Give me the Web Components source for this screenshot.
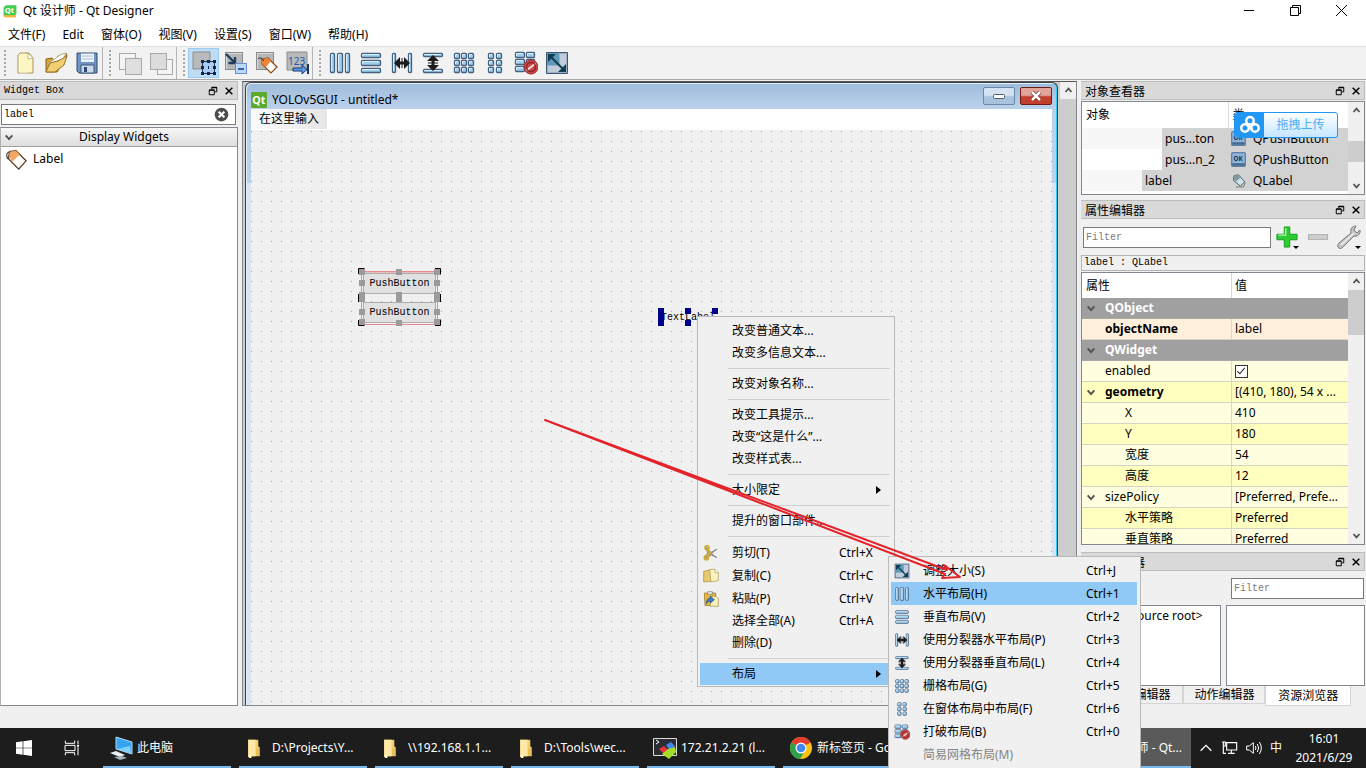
<!DOCTYPE html>
<html lang="zh-CN">
<head>
<meta charset="utf-8">
<title>Qt 设计师 - Qt Designer</title>
<style>
  html, body { margin: 0; height: 100%; }
  body {
    font: 12px/16px "Noto Sans", "Noto Sans CJK SC", sans-serif;
    color: #000; background: #f0f0f0; overflow: hidden;
  }
</style>
</head>
<body>
<designer-app></designer-app>

<script>
const RESET = `
  *, *::before, *::after { box-sizing: border-box; }
  :host { box-sizing: border-box; display: block; }
  :host([hidden]) { display: none; }
  button, input { font: inherit; color: inherit; margin: 0; padding: 0; border: 0; background: none; border-radius: 0; outline: 0; }
  a { color: inherit; text-decoration: none; }
  svg { display: block; }
  .mono { font: 10px/14px "Liberation Mono", "Noto Sans CJK SC", monospace; }
`;
function define(tag, css, html) {
  customElements.define(tag, class extends HTMLElement {
    constructor() {
      super();
      const host = this;
      const root = this.attachShadow({ mode: 'open' });
      root.innerHTML = `<style>${RESET}${css}</style>${typeof html === 'function' ? html(n => host.getAttribute(n) || '') : html}`;
    }
  });
}

/* ---------- icons ---------- */
const bar = (x, y, w, h) =>
  `<rect x="${x + .5}" y="${y + .5}" width="${w - 1}" height="${h - 1}" rx="1" fill="#9fcfee" stroke="#46607f" stroke-width="1.300"/><path d="M${x + 1.5} ${y + h - 2}V${y + 1.5}H${x + w - 2}" stroke="#d8efff" fill="none"/>`;
const cells = (xs, ys, s) => xs.map(x => ys.map(y => bar(x, y, s, s)).join('')).join('');
const graySq = (x, y, s, f) => `<rect x="${x + .5}" y="${y + .5}" width="${s}" height="${s}" fill="${f}" stroke="#a9a9a9"/>`;
const darkSq = `<rect x="2.500" y="1.500" width="17" height="17" fill="#b5b7b9" stroke="#8a8c8e"/><path d="M3.500 18V2.500H19" stroke="#d6d8da" fill="none"/>`;
const folderIcon = '<path d="M5 2h12v8l2 1v11H7l-2 1z" fill="#e9bf5a"/><path d="M5 2h9v20H8l-3 1z" fill="#ffe9a6"/><path d="M14 3h3v8l-3 3z" fill="#f3cf72"/><path d="M6 20h3v4H6z" fill="#fff3c9"/>';
const ICONS = {
  qt: '<path d="M5 2h18v15l-5 4H1V6z" fill="#41cd52"/><path d="M2 19h20v4H2z" fill="#f0b43c"/><text x="3" y="15" font-family="Noto Sans" font-weight="700" font-size="13" fill="#fff">Qt</text>',
  qtbox: '<rect x="0" y="0" width="24" height="24" rx="2" fill="#5caa2c"/><text x="2" y="18" font-family="Open Sans" font-weight="700" font-size="16" fill="#fff">Qt</text>',
  newfile: '<path d="M7 2h9l4 5v15H5V4z" fill="#fdf6c4" stroke="#a8975a"/><path d="M15 2l5 5-5 1z" fill="#fff" stroke="#b7a768" stroke-width=".8"/><path d="M6.500 4v17h8" stroke="#fffde8" fill="none"/>',
  open: '<path d="M2 21V8l6-1 2 2 4-4 8-3 1 3-4 2v5l-6 9z" fill="#d4a13a" stroke="#8a651c"/><path d="M4 13L16 4l6-2-3 6z" fill="#fff" stroke="#b9b19b" stroke-width=".8"/><path d="M2 21l4-9 8-2 9-5-3 9-9 7z" fill="#f2ce72" stroke="#9a7327"/>',
  save: '<path d="M2 2h20v20H4l-2-2z" fill="#6f94c4" stroke="#2f4a74"/><path d="M6 2.500h13V11H6z" fill="#eaf1f8"/><path d="M7 5h11M7 8h11" stroke="#b5c6da"/><path d="M6 14h13v8H6z" fill="#cfdae8" stroke="#38557f"/><path d="M9 16h3v5H9z" fill="#2f4a74"/>',
  front: graySq(1, 2, 16, '#f4f4f4') + graySq(7, 7, 16, '#dfdfdf'),
  back: graySq(8, 8, 15, '#f4f4f4') + graySq(1, 2, 16, '#dcdcdc'),
  widgets: '<path d="M1 1h17v17H1z" fill="#b8babc" stroke="#8a8c8e"/><path d="M10.500 10.500h12v12h-12z" fill="#aac9f3" stroke="#20395f"/><path d="M9 9h3v3H9zM15 9h3v3h-3zM21 9h3v3h-3zM9 15h3v3H9zM21 15h3v3h-3zM9 21h3v3H9zM15 21h3v3h-3zM21 21h3v3h-3zM16 15h1v3h-1z" fill="#12264a"/>',
  signals: darkSq + '<path d="M3 3l8 8M12 6v6H5.500" stroke="#1d3f5d" stroke-width="2.400" fill="none"/><rect x="12.500" y="12.500" width="11" height="10" fill="#bcd7f8" stroke="#6c8fd0"/><path d="M15 18h6" stroke="#3561b4" stroke-width="2"/>',
  buddies: darkSq + '<path d="M8 8l6-1 9 9-6 6-9-9z" fill="#fff" stroke="#8f4512" stroke-width="1.200"/><path d="M8 8l6-1 3 3-5.500 6.500L8 13z" fill="#f08436"/><path d="M4 8c2-2 4-1 6 2" stroke="#222" fill="none"/>',
  taborder: '<path d="M2 1h20v18H2z" fill="#b7b9bb" stroke="#8a8c8e"/><text x="3" y="14" font-family="Noto Sans" font-weight="400" font-size="10" fill="#1e5aa8">123</text><path d="M8 17h9v-3l5 4.500-5 4.500v-3H8z" fill="#5d9be6" stroke="#16366e"/><path d="M23 13v10" stroke="#16366e" stroke-width="2"/>',
  hbox: bar(2, 2, 5, 20) + bar(9, 2, 6, 20) + bar(17, 2, 5, 20),
  vbox: bar(2, 2, 20, 5) + bar(2, 9, 20, 6) + bar(2, 17, 20, 5),
  hsplit: bar(2, 2, 4, 20) + bar(18, 2, 4, 20) + '<path d="M4 12l6-6v4.500h4V6l6 6-6 6v-4.500h-4V18z" fill="#1c1c1c"/><path d="M12 7v10" stroke="#1c1c1c"/>',
  vsplit: bar(2, 2, 20, 4) + bar(2, 18, 20, 4) + '<path d="M12 4l6 6h-4.500v4H18l-6 6-6-6h4.500v-4H6z" fill="#1c1c1c"/><path d="M7 12h10" stroke="#1c1c1c"/>',
  grid: cells([2, 9, 16], [2, 9, 16], 6),
  form: cells([5, 13], [2, 9, 16], 6),
  brk: bar(1, 1, 10, 6) + bar(12, 1, 9, 6) + bar(1, 8, 10, 6) + bar(12, 8, 9, 6) + bar(1, 15, 10, 6) + '<circle cx="17" cy="16" r="7" fill="#cf4848" stroke="#9c2a2a"/><path d="M12.500 19.500l9-7" stroke="#e9dede" stroke-width="2"/><circle cx="17" cy="16" r="4.500" fill="none" stroke="#8f2525" stroke-width="1.500"/>',
  adjust: '<path d="M1.500 1.500h21v21h-21z" fill="#9dafc4" stroke="#3e5876"/><path d="M2 2h12v12H2z" fill="#5f9ab8"/><path d="M15 3h6v18H3v-6h12z" fill="#c0cddb"/><path d="M5 5l14 14" stroke="#123e52" stroke-width="2"/><path d="M3 3h8l-8 8zM21 21h-8l8-8z" fill="#123e52"/>',
  label: '<path d="M3 12C0 5 4 2 10 7" stroke="#333" stroke-width="1.200" fill="none"/><path d="M4 10l1-6 7-1 11 11-8 9L4 12z" fill="#fff" stroke="#5a3a20" stroke-width="1.400"/><path d="M5 10V4l7-1 4 4-8 8z" fill="#f2a765"/>',
  labelg: '<path d="M4 10l1-6 7-1 10 11-7 7L4 12z" fill="#cfe2ea" stroke="#46606e" stroke-width="1.600"/><path d="M5 10V4l7-1 3 4-7 7z" fill="#81999f"/><path d="M8 22h12l3-7" stroke="#8a8a8a" stroke-width="2" fill="none"/>',
  okbtn: '<rect x="1" y="1" width="22" height="22" rx="2" fill="#8db4d8" stroke="#5d80a4" stroke-width="2"/><path d="M2 18h20v4H2z" fill="#46688c"/><text x="4" y="15" font-family="Noto Sans" font-weight="700" font-size="10" fill="#173657">OK</text>',
  cut: '<path d="M4 2l8 9 9-5-8 7 8 6-9-4-6 5-4-1 5-7z" fill="#a7a9a3" stroke="#72746c"/><circle cx="6" cy="4" r="3" fill="none" stroke="#d2a930" stroke-width="2.500"/><circle cx="5" cy="19" r="3" fill="none" stroke="#d2a930" stroke-width="2.500"/><path d="M7 7l4 5-4 5" stroke="#d2a930" stroke-width="3" fill="none"/>',
  copy: '<path d="M1 5l9-2 3 3v14l-12 1z" fill="#e9c96e" stroke="#a98a3d"/><path d="M10 2h8l5 5v12l-11 2z" fill="#fbf2c3" stroke="#ad9250"/><path d="M18 2v5h5" fill="#fff" stroke="#ad9250"/>',
  paste: '<path d="M2 3h17v18l-16 1z" fill="#e4b73c" stroke="#8f6e20"/><path d="M7 1h7v4H7z" fill="#eee" stroke="#777"/><path d="M11 8h9l3 3v12H11z" fill="#f7f0bb" stroke="#9a874a"/><path d="M5 19c0-6 3-8 6-8V8l6 5-6 5v-3c-3 0-4 1-6 4z" fill="#3f7fd0" stroke="#1d4684"/>',
  plus: '<path d="M9 1h6v8h8v6h-8v8H9v-8H1V9h8z" fill="#2ecb35" stroke="#129a1b"/><path d="M10.500 2.500V10H2.500" stroke="#b5f3b5" fill="none" stroke-width="1.500"/>',
  minus: '<rect x="1.500" y="9.500" width="21" height="5" fill="#cfcfcf" stroke="#a8a8a8"/>',
  wrench: '<path d="M1 22c-1-2 0-3 1-4L14 8c-1-4 1-7 5-7l-2 4 3 3 3-3c1 4-3 7-6 6L6 22c-2 2-4 2-5 0z" fill="#bfc1c3" stroke="#77797b"/><path d="M4 20L17 8" stroke="#f3f3f3" stroke-width="1.500"/>',
  folder: folderIcon,
  pc: '<path d="M7 1l16 5v12L7 13z" fill="#35a6ee" stroke="#b6d9ee"/><path d="M8 13l14 5-1-8z" fill="#7fd0fb"/><path d="M1 17l6-2 9 4-5 2z" fill="#e9eef2"/><path d="M5 21l8-1 5 2-7 2z" fill="#a8b2ba"/>',
  xterm: '<path d="M.5 2.500h23v17H.5z" fill="#2c2d33" stroke="#dcdcdc"/><path d="M3 4l3 2-3 2" stroke="#fff" fill="none"/><path d="M6 13l5-3 4 4-4 4z" fill="#ef3340"/><path d="M13 9l5-3 4 4-5 5z" fill="#3f86ee"/><path d="M9 18l6-5 7-2 1 5-7 7z" fill="#a6dd28"/>',
  chrome: '<circle cx="12" cy="12" r="11" fill="#fbc116"/><path d="M12 12L2.500 6.500A11 11 0 0 1 21.500 6.500z" fill="#e33b2e"/><path d="M12 1a11 11 0 0 1 9.500 5.500H12z" fill="#e33b2e"/><path d="M2.500 6.500A11 11 0 0 0 11 23l5-8.500-4-2.500z" fill="#2aa14b"/><circle cx="12" cy="12" r="5.500" fill="#fff"/><circle cx="12" cy="12" r="4.300" fill="#4285f4"/>',
  windows: '<path d="M0 3.500l10-1.500v9.500H0zM11 1.800L24 0v11.500H11zM0 12.500h10V22L0 20.500zM11 12.500h13V24l-13-1.800z" fill="#fff"/>',
  taskview: '<path d="M2 1v4h14V1M2 23v-4h14v4M1.500 8h15v8h-15z" stroke="#fff" stroke-width="1.500" fill="none"/><path d="M21 1v5M21 11v12" stroke="#fff" stroke-width="1.500"/><path d="M19.500 7h3v3h-3z" fill="#fff"/>',
  up: '<path d="M4 16l8-9 8 9" stroke="#505050" stroke-width="4.500" fill="none"/>',
  down: '<path d="M4 8l8 9 8-9" stroke="#505050" stroke-width="4.500" fill="none"/>',
  chev: '<path d="M4 16l8-8 8 8" stroke="#fff" stroke-width="2" fill="none"/>',
  net: '<path d="M7 4h15v11H7zM14 15v5M9 20h10M2 3v6h5M2 9v11h4M0 3h5v5" stroke="#fff" stroke-width="1.700" fill="none"/>',
  sound: '<path d="M1 9v6h4l6 5V4L5 9z" stroke="#fff" stroke-width="1.500" fill="none"/><path d="M14 9q2 3 0 6M17 6q4 6 0 12M20 3q6 9 0 18" stroke="#fff" stroke-width="1.500" fill="none"/>',
  float: '<path d="M9 7V3h12v11h-4M3 9.500h12V21H3z" stroke="#000" stroke-width="2.400" fill="none"/><path d="M3 10h12M9 4h12" stroke="#000" stroke-width="3"/>',
  close: '<path d="M4 4l16 16M20 4L4 20" stroke="#000" stroke-width="3.500" fill="none"/>',
  clear: '<circle cx="12" cy="12" r="11" fill="#4d4d4d"/><path d="M7.500 7.500l9 9M16.500 7.500l-9 9" stroke="#fff" stroke-width="3.500"/>',
  cloud: '<g fill="none" stroke="#fff" stroke-width="3"><circle cx="12" cy="7" r="4.500"/><circle cx="6" cy="15.500" r="4.500"/><circle cx="18" cy="15.500" r="4.500"/><path d="M9 12l6 6"/></g>'
};
customElements.define('ui-icon', class extends HTMLElement {
  constructor() {
    super();
    const s = this.getAttribute('size') || 16;
    this.attachShadow({ mode: 'open' }).innerHTML =
      `<style>:host{display:block;flex:none;width:${s}px;height:${s}px}svg{display:block;width:100%;height:100%}</style>
       <svg viewBox="0 0 24 24" aria-hidden="true">${ICONS[this.getAttribute('name')] || ''}</svg>`;
  }
});
const icon = (n, s = 16) => `<ui-icon name="${n}" size="${s}"></ui-icon>`;

/* ---------- window chrome ---------- */
define('app-titlebar', `
  :host { display: flex; align-items: center; height: 24px; background: #fff; padding: 0 2px 4px 3px; gap: 6px; flex: none; }
  span { flex: 1; padding-top: 2px; }
  ui-icon { margin-top: 2px; }
  div { display: flex; }
  button { width: 46px; height: 20px; display: grid; place-items: center; }
`, `
  ${icon('qt', 14)}<span>Qt 设计师 - Qt Designer</span>
  <div>
    <button aria-label="Minimize"><svg width="11" height="11"><path d="M0 5.500h10" stroke="#000"/></svg></button>
    <button aria-label="Restore"><svg width="11" height="11"><path d="M2.500 2.500v-2h8v8h-2M.5 2.500h8v8h-8z" stroke="#000" fill="none"/></svg></button>
    <button aria-label="Close"><svg width="11" height="11"><path d="M0 0l11 11M11 0L0 11" stroke="#000" fill="none"/></svg></button>
  </div>`);

define('app-menubar', `
  :host { display: block; height: 22px; background: #fff; flex: none; }
  nav { display: flex; height: 100%; }
  button { padding: 0 9px 0 8px; }
`, `<nav>${['文件(F)', 'Edit', '窗体(O)', '视图(V)', '设置(S)', '窗口(W)', '帮助(H)'].map(t => `<button>${t}</button>`).join('')}</nav>`);

define('tool-group', `
  :host { display: flex; align-items: center; border-right: 1px solid #b4b4b4; margin-right: 2px; height: 32px; }
  :host([last]) { border: 0; }
  i { width: 2px; height: 26px; margin: 0 3px 0 4px; background: repeating-linear-gradient(#a8a8a8 0 2px, transparent 2px 4px); }
`, `<i></i><slot></slot>`);
define('tool-button', `
  button { width: 31px; height: 30px; display: grid; place-items: center; }
  :host([active]) button { background: #bfdcf5; border: 1px solid #9acbf2; }
`, a => `<button aria-label="${a('icon')}">${icon(a('icon'), 24)}</button>`);
define('tool-bar', `
  :host { display: flex; height: 34px; flex: none; align-items: center; background: #f2f2f2; border-top: 1px solid #e2e2e2; border-bottom: 1px solid #a9a9a9; }
`, [['newfile', 'open', 'save'], ['front', 'back'], ['widgets', 'signals', 'buddies', 'taborder'],
    ['hbox', 'vbox', 'hsplit', 'vsplit', 'grid', 'form', 'brk', 'adjust']]
  .map((g, i) => `<tool-group ${i === 3 ? 'last' : ''}>${g.map(n => `<tool-button icon="${n}" ${n === 'widgets' ? 'active' : ''}></tool-button>`).join('')}</tool-group>`).join(''));

/* ---------- docks ---------- */
define('dock-panel', `
  :host { display: flex; flex-direction: column; min-height: 0; }
  header { display: flex; align-items: center; height: 19px; flex: none; padding: 0 0 0 4px; background: #d9d9d9; border: 1px solid #bdbdbd; border-left: 0; }
  h2 { flex: 1; margin: 0; font: 12px/16px "Noto Sans CJK SC", sans-serif; }
  :host([latin]) h2 { font: 10px/14px "Liberation Mono", monospace; }
  button { width: 16px; height: 16px; display: grid; place-items: center; }
`, a => `<header><h2>${a('heading')}</h2><button aria-label="Float">${icon('float', 10)}</button><button aria-label="Close">${icon('close', 10)}</button></header><slot></slot>`);

define('scroll-rail', `
  :host { display: flex; flex-direction: column; align-items: center; width: 16px; background: #f0f0f0; flex: none; }
  ui-icon { margin: 4px 0; }
  .track { flex: 1; align-self: stretch; padding-top: var(--offset, 0); min-height: 0; }
  .thumb { height: var(--thumb, 100%); background: #cdcdcd; }
`, `${icon('up', 9)}<div class="track"><div class="thumb"></div></div>${icon('down', 9)}`);

define('widget-box', `
  :host { display: flex; flex-direction: column; }
  dock-panel { flex: 1; }
  .search { display: flex; align-items: center; flex: none; height: 21px; margin: 4px 2px 2px 1px; border: 1px solid #7a7a7a; background: #fff; padding: 0 6px 0 2px; }
  .search input { flex: 1; min-width: 0; }
  .tree { flex: 1; background: #fff; border: 1px solid #828790; border-left-color: #b0b0b0; }
  .cat { display: flex; width: 100%; height: 19px; align-items: center; padding: 0 3px; background: linear-gradient(#f7f7f7, #dedede); border-bottom: 1px solid #a0a0a0; }
  .cat span { flex: 1; text-align: center; }
  .item { display: flex; align-items: center; gap: 6px; height: 24px; padding-left: 4px; }
`, `<dock-panel heading="Widget Box" latin>
    <div class="search"><input class="mono" aria-label="Filter widgets" value="label"><button aria-label="Clear">${icon('clear', 15)}</button></div>
    <div class="tree"><button class="cat">${icon('down', 10)}<span>Display Widgets</span></button>
    <div class="item">${icon('label', 22)}<span>Label</span></div></div>
  </dock-panel>`);

define('object-inspector', `
  .box { display: flex; height: 94px; margin-top: 1px; border: 1px solid #828790; background: #fff; overflow: hidden; }
  table { flex: 1; align-self: flex-start; border-collapse: collapse; table-layout: fixed; width: 100%; }
  th { font-weight: 400; text-align: left; height: 26px; padding: 0 4px; }
  th + th { border-left: 1px solid #ddd; }
  td { height: 21px; padding: 0; }
  tr:nth-child(odd) td { background: #f7f7f7; }
  .n { background: #d2d2d2; margin-left: 80px; padding-left: 3px; line-height: 21px; white-space: nowrap; }
  .n.up { margin-left: 60px; }
  .c { display: flex; align-items: center; gap: 7px; padding-left: 3px; height: 21px; background: #d2d2d2; }
  scroll-rail { --offset: 22px; --thumb: 21px; }
`, `<dock-panel heading="对象查看器"><div class="box">
    <table><colgroup><col><col style="width:120px"></colgroup><thead><tr><th>对象</th><th>类</th></tr></thead><tbody>
      <tr><td><div class="n">pus...ton</div></td><td><div class="c">${icon('okbtn', 15)}QPushButton</div></td></tr>
      <tr><td><div class="n">pus...n_2</div></td><td><div class="c">${icon('okbtn', 15)}QPushButton</div></td></tr>
      <tr><td><div class="n up">label</div></td><td><div class="c">${icon('labelg', 15)}QLabel</div></td></tr>
    </tbody></table><scroll-rail></scroll-rail></div></dock-panel>`);

const PROPS = [
  ['QObject', null, 'g'], ['objectName', 'label', 'o b'], ['QWidget', null, 'g'],
  ['enabled', '<input type="checkbox" checked aria-label="enabled">', 'l'],
  ['geometry', '[(410, 180), 54 x ...', 'd b e'], ['X', '410', 'l s'], ['Y', '180', 'd s'], ['宽度', '54', 'l s'], ['高度', '12', 'd s'],
  ['sizePolicy', '[Preferred, Prefe...', 'l e'], ['水平策略', 'Preferred', 'd s'], ['垂直策略', 'Preferred', 'l s']
];
define('property-editor', `
  :host { display: flex; flex-direction: column; min-height: 0; }
  dock-panel { flex: 1; }
  .tools { display: flex; align-items: center; flex: none; height: 36px; padding: 0 4px 0 2px; }
  .tools > input { flex: 1; min-width: 0; height: 21px; border: 1px solid #7a7a7a; background: #fff; padding: 0 2px; }
  input::placeholder { color: #7b7b7b; opacity: 1; }
  .tools button { position: relative; margin-left: 4px; width: 24px; height: 24px; display: grid; place-items: center; }
  .tools button + button { margin-left: 7px; }
  .drop::after { content: ""; position: absolute; right: 0; bottom: 0; border: 3px solid transparent; border-top-color: #000; border-bottom: 0; }
  .obj { height: 16px; flex: none; border: 1px solid #b5b5b5; padding: 0 2px; }
  .box { flex: 1; min-height: 0; display: flex; margin-top: 1px; border: 1px solid #828790; background: #fff; overflow: hidden; }
  .view { flex: 1; overflow: hidden; min-width: 0; }
  table { width: 100%; border-collapse: separate; border-spacing: 0; table-layout: fixed; }
  thead th { height: 25px; font-weight: 400; text-align: left; padding: 0 4px; }
  tbody th, td { height: 21px; padding: 0 0 0 4px; border-bottom: 1px solid #d4d4c4; text-align: left; font-weight: 400; line-height: 16px; white-space: nowrap; overflow: hidden; }
  td, thead th + th { border-left: 1px solid #d8d8d0; padding-left: 3px; }
  tbody th > div { display: flex; align-items: center; gap: 9px; padding-left: 19px; }
  .g th { background: #a0a0a0; color: #fff; font-weight: 700; border-color: #a8a8a8; }
  .g th > div, .e th > div { padding-left: 0; }
  .b th { font-weight: 700; }
  .s th > div { padding-left: 39px; }
  .o > * { background: #ffefdb; } .l > * { background: #ffffdf; } .d > * { background: #ffffbf; }
  input[type=checkbox] { appearance: none; display: block; position: relative; width: 13px; height: 13px; border: 1px solid #333; background: #fff; }
  input[type=checkbox]::after { content: ""; position: absolute; left: 3px; top: 0; width: 4px; height: 8px; border: solid #222; border-width: 0 1px 1px 0; transform: rotate(40deg); }
  scroll-rail { --thumb: 45px; }
`, `<dock-panel heading="属性编辑器">
    <div class="tools"><input class="mono" placeholder="Filter" aria-label="Filter properties"><button class="drop" aria-label="Add">${icon('plus', 22)}</button><button aria-label="Remove">${icon('minus', 22)}</button><button class="drop" aria-label="Configure">${icon('wrench', 24)}</button></div>
    <div class="obj mono">label : QLabel</div>
    <div class="box"><div class="view"><table><colgroup><col><col style="width:117px"></colgroup><thead><tr><th>属性</th><th>值</th></tr></thead><tbody>
    ${PROPS.map(([n, v, c]) => `<tr class="${c}"><th scope="row" ${v === null ? 'colspan="2"' : ''}><div>${/[ge]$/.test(c) ? icon('down', 10) : ''}${n}</div></th>${v === null ? '' : `<td>${v}</td>`}</tr>`).join('')}
    </tbody></table></div><scroll-rail></scroll-rail></div></dock-panel>`);

define('resource-browser', `
  .tools { display: flex; justify-content: flex-end; align-items: center; height: 34px; padding: 0 1px; }
  input { width: 133px; height: 21px; border: 1px solid #7a7a7a; background: #fff; padding: 0 2px; }
  input::placeholder { color: #7b7b7b; opacity: 1; }
  .panes { display: grid; grid-template-columns: 1fr 1fr; gap: 5px; height: 81px; }
  .panes > div { background: #fff; border: 1px solid #828790; padding: 2px 17px; text-align: right; }
  .tabs { display: flex; height: 20px; padding-right: 14px; }
  .tabs button { flex: 81 1 0; border: 1px solid #d5d5d5; border-top: 0; height: 18px; white-space: nowrap; }
  .tabs button:first-child { flex-grow: 102; }
  .tabs button[aria-selected=true] { background: #fff; height: 20px; flex-grow: 85; }
`, `<dock-panel heading="资源浏览器">
    <div class="tools"><input class="mono" placeholder="Filter" aria-label="Filter resources"></div>
    <div class="panes"><div>&lt;resource root&gt;</div><div></div></div></dock-panel>
    <div class="tabs" role="tablist"><button role="tab">信号/槽编辑器</button><button role="tab">动作编辑器</button><button role="tab" aria-selected="true">资源浏览器</button></div>`);

/* ---------- form being edited ---------- */
define('form-canvas', `
  :host { position: relative; flex: 1; overflow: hidden; background: #f0f0f0 conic-gradient(at 1px 1px, transparent 270deg, #a3a3a3 270deg) 0 1px / 10px 10px; }
  .w { position: absolute; font: 10px/12px "Liberation Mono", monospace; }
  .btn { width: 73px; height: 21px; padding-top: 1px; background: #e1e1e1; border: 1px solid #adadad; }
  svg { position: absolute; left: 0; top: 0; }
`, () => {
  const h = (x, y, c = '#9b9b9b') => `<rect x="${x}" y="${y}" width="6" height="6" fill="${c}"/>`;
  return `
    <svg width="200" height="210" aria-hidden="true"><path d="M110.500 141.500h76v53h-76zM112.500 143h72" fill="none" stroke="#e98b8b"/></svg>
    <button class="w btn" style="left:112px;top:143px">PushButton</button>
    <button class="w btn" style="left:112px;top:172px">PushButton</button>
    <span class="w" style="left:410px;top:182px">TextLabel</span>
    <svg width="480" height="210" aria-hidden="true">
      <path d="M107.500 144v-5.500h6M184 138.500h5.500v6M107.500 190v5.500h6M184 195.500h5.500v-6M107.500 164v8M189.500 164v8" stroke="#000" fill="none"/>
      ${[[108, 139], [145, 139], [183, 139], [108, 150], [183, 150], [108, 162], [108, 166], [145, 162], [145, 166], [183, 162], [183, 166], [108, 179], [183, 179], [108, 189], [145, 190], [183, 189]].map(p => h(p[0], p[1])).join('')}
      ${[[407, 178], [407, 184], [407, 190], [434, 178], [434, 190], [461, 178]].map(p => h(p[0], p[1], '#00008b')).join('')}
    </svg>`;
});

define('form-window', `
  :host { display: flex; flex-direction: column; border: 1px solid #3a3f45; border-bottom: 0; border-radius: 6px 6px 0 0; background: linear-gradient(#9fbbda, #b9d0ea 24px, #b9d1ea 100px, #d7e4f2 100px); padding: 0 5px; box-shadow: inset -1px 0 #35d0f0, inset 1px 1px #e2eefa; min-width: 0; }
  header { display: flex; align-items: center; height: 26px; flex: none; gap: 5px; padding-top: 7px; }
  h1 { flex: 1; margin: 0; font: 12px/18px "Noto Sans", sans-serif; }
  .b { align-self: flex-start; margin: -3px 0 0; width: 32px; height: 18px; border: 1px solid #6b87a6; border-radius: 2px; display: grid; place-items: center; background: linear-gradient(#d4e2f1 45%, #a9c3de 55%); }
  .x { background: linear-gradient(#e2a498 45%, #c1402d 55%); border-color: #6d1f17; }
  .menu { height: 21px; flex: none; background: #fff; }
  .menu button { height: 20px; padding: 0 8px; background: linear-gradient(to right, #fafafa, #e6e6e6); }
`, `<header>${icon('qtbox', 16)}<h1>YOLOv5GUI - untitled*</h1>
    <button class="b" aria-label="Minimize"><svg width="12" height="5"><rect x=".5" y=".5" width="11" height="4" rx="1" fill="#fff" stroke="#4c5b6b"/></svg></button>
    <button class="b x" aria-label="Close"><svg width="12" height="10"><path d="M2 1l8 8M10 1L2 9" stroke="#6b2b25" stroke-width="4"/><path d="M2 1l8 8M10 1L2 9" stroke="#fff" stroke-width="2.500"/></svg></button></header>
  <div class="menu"><button>在这里输入</button></div><form-canvas></form-canvas>`);

define('mdi-area', `
  :host { display: flex; min-width: 0; border: 1px solid #828790; border-top-color: #555; padding-left: 2px; background: #cdcdcd; }
  form-window { flex: 1; margin-right: 2px; }
`, `<form-window></form-window><scroll-rail></scroll-rail>`);

/* ---------- menus ---------- */
define('popup-menu', `
  :host { position: absolute; background: #f0f0f0; border: 1px solid #b9b9b9; padding: 3px 2px 1px; }
`, `<slot></slot>`);
define('menu-item', `
  button { display: flex; align-items: center; width: 100%; height: 22px; text-align: left; white-space: nowrap; }
  :host([tall]) button { height: 23px; }
  :host([active]) button { background: #90c8f6; }
  :host([off]) button { color: #858585; }
  .i { width: 32px; padding-left: 3px; flex: none; }
  .t { flex: 1; }
  .k { width: var(--key, 49px); }
  svg { margin-right: 11px; }
`, a => `<button role="menuitem" ${a('off') ? 'disabled' : ''}><span class="i">${a('icon') ? icon(a('icon'), 16) : ''}</span><span class="t"><slot></slot></span>${a('key') ? `<span class="k">${a('key')}</span>` : ''}${a('sub') ? '<svg width="5" height="8"><path d="M0 0l5 4-5 4z"/></svg>' : ''}</button>`);
define('menu-line', `:host { height: 9px; padding: 4px 2px 0 28px; } hr { margin: 0; border: 0; border-top: 1px solid #cfcfcf; }`, '<hr>');

/* ---------- overlays ---------- */
define('upload-badge', `
  :host { position: absolute; }
  button { display: flex; width: 104px; height: 26px; border: 1px solid #2196f3; border-radius: 3px; overflow: hidden; background: linear-gradient(#fff, #c5e6ff); color: #4aaef5; }
  .c { width: 29px; height: 24px; display: grid; place-items: center; background: #2196f3; }
  .t { flex: 1; line-height: 24px; }
`, `<button><span class="c">${icon('cloud', 20)}</span><span class="t">拖拽上传</span></button>`);
define('arrow-note', `:host { position: absolute; pointer-events: none; }`,
  `<svg width="430" height="170" aria-hidden="true"><path d="M4 4L406 154 403 149 419 161 401 162 404 158z" fill="none" stroke="#e3242b" stroke-width="2" stroke-linejoin="round"/></svg>`);

/* ---------- taskbar ---------- */
define('task-button', `
  a { display: flex; align-items: center; gap: 4px; width: 128px; height: 40px; padding: 2px 6px 0; border-bottom: 2px solid #76b9ed; color: #fff; white-space: nowrap; overflow: hidden; }
  :host([folder]) a { gap: 8px; padding-left: 5px; }
  :host([active]) { margin-left: auto; }
  :host([active]) a { background: #5a5a5a; justify-content: flex-end; padding-right: 9px; }
`, a => `<a href="#">${icon(a('icon'), a('folder') ? 20 : 24)}<slot></slot></a>`);
define('task-bar', `
  :host { display: flex; align-items: center; height: 40px; flex: none; background: #1d1d1d; color: #fff; }
  .sys { width: 48px; height: 40px; display: grid; place-items: center; }
  .tasks { flex: 1; display: flex; gap: 8px; margin-left: 7px; min-width: 0; }
  .tray { display: flex; align-items: center; gap: 8px; padding: 0 12px 0 7px; }
  .clock { text-align: center; line-height: 19px; margin-left: 4px; width: 60px; }
`, `<button class="sys" aria-label="Start">${icon('windows', 16)}</button><button class="sys" aria-label="Task view">${icon('taskview', 16)}</button>
  <div class="tasks">
    <task-button icon="pc">此电脑</task-button>
    <task-button icon="folder" folder="1">D:\\Projects\\Y...</task-button>
    <task-button icon="folder" folder="1">\\\\192.168.1.1...</task-button>
    <task-button icon="folder" folder="1">D:\\Tools\\wec...</task-button>
    <task-button icon="xterm">172.21.2.21 (l...</task-button>
    <task-button icon="chrome">新标签页 - Go...</task-button>
    <task-button icon="qtbox" active>Qt 设计师 - Qt...</task-button>
  </div>
  <div class="tray">${icon('chev')}${icon('net')}${icon('sound')}<span>中</span><div class="clock">16:01<br>2021/6/29</div></div>`);

/* ---------- application ---------- */
define('designer-app', `
  :host { display: flex; flex-direction: column; height: 100vh; position: relative; overflow: hidden; }
  main { flex: 1; min-height: 0; display: grid; grid-template-columns: 238px minmax(0, 1fr) 285px; grid-template-rows: minmax(0, 1fr); column-gap: 4px; padding-top: 1px; }
  aside { display: flex; flex-direction: column; gap: 5px; min-height: 0; padding-right: 1px; }
  property-editor { flex: 1; margin-bottom: 2px; }
  .status { height: 22px; flex: none; }
  .ctx { left: 697px; top: 316px; width: 198px; --key: 53px; }
  .sub { left: 888px; top: 556px; width: 253px; padding: 2px 3px 2px 2px; --key: 51px; }
  upload-badge { left: 1234px; top: 112px; }
  arrow-note { left: 541px; top: 416px; }
`, `
  <app-titlebar></app-titlebar><app-menubar></app-menubar><tool-bar></tool-bar>
  <main><widget-box></widget-box><mdi-area></mdi-area>
    <aside><object-inspector></object-inspector><property-editor></property-editor><resource-browser></resource-browser></aside></main>
  <div class="status"></div>
  <task-bar></task-bar>
  <upload-badge></upload-badge>
  <popup-menu class="ctx" role="menu">
    <menu-item>改变普通文本...</menu-item><menu-item>改变多信息文本...</menu-item><menu-line></menu-line>
    <menu-item>改变对象名称...</menu-item><menu-line></menu-line>
    <menu-item>改变工具提示...</menu-item><menu-item>改变“这是什么”...</menu-item><menu-item>改变样式表...</menu-item><menu-line></menu-line>
    <menu-item sub="1">大小限定</menu-item><menu-line></menu-line>
    <menu-item>提升的窗口部件...</menu-item><menu-line></menu-line>
    <menu-item tall icon="cut" key="Ctrl+X">剪切(T)</menu-item><menu-item tall icon="copy" key="Ctrl+C">复制(C)</menu-item><menu-item tall icon="paste" key="Ctrl+V">粘贴(P)</menu-item>
    <menu-item key="Ctrl+A">选择全部(A)</menu-item><menu-item>删除(D)</menu-item><menu-line></menu-line>
    <menu-item active sub="1">布局</menu-item>
  </popup-menu>
  <popup-menu class="sub" role="menu">
    <menu-item tall icon="adjust" key="Ctrl+J">调整大小(S)</menu-item>
    <menu-item tall active icon="hbox" key="Ctrl+1">水平布局(H)</menu-item>
    <menu-item tall icon="vbox" key="Ctrl+2">垂直布局(V)</menu-item>
    <menu-item tall icon="hsplit" key="Ctrl+3">使用分裂器水平布局(P)</menu-item>
    <menu-item tall icon="vsplit" key="Ctrl+4">使用分裂器垂直布局(L)</menu-item>
    <menu-item tall icon="grid" key="Ctrl+5">栅格布局(G)</menu-item>
    <menu-item tall icon="form" key="Ctrl+6">在窗体布局中布局(F)</menu-item>
    <menu-item tall icon="brk" key="Ctrl+0">打破布局(B)</menu-item>
    <menu-item tall off="1">简易网格布局(M)</menu-item>
  </popup-menu>
  <arrow-note></arrow-note>`);
</script>
</body>
</html>
